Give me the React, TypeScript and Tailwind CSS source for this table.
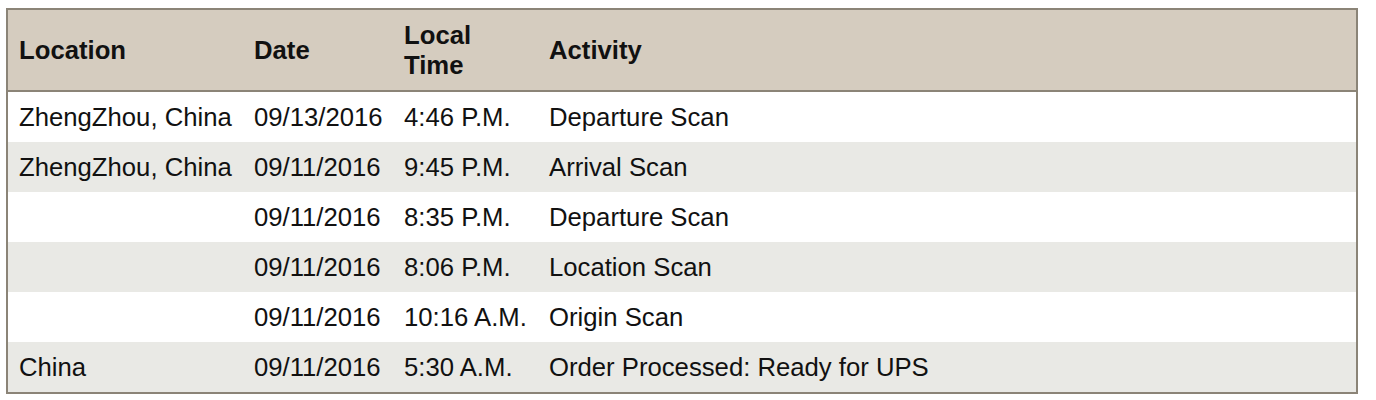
import React from "react";

const rows = [
  ["ZhengZhou, China", "09/13/2016", "4:46 P.M.", "Departure Scan"],
  ["ZhengZhou, China", "09/11/2016", "9:45 P.M.", "Arrival Scan"],
  ["", "09/11/2016", "8:35 P.M.", "Departure Scan"],
  ["", "09/11/2016", "8:06 P.M.", "Location Scan"],
  ["", "09/11/2016", "10:16 A.M.", "Origin Scan"],
  ["China", "09/11/2016", "5:30 A.M.", "Order Processed: Ready for UPS"],
];

export default function App() {
  return (
    <div className="bg-white pl-[6px] pt-[8px] w-[1376px] h-[400px] text-[#111] [font-family:'Liberation_Sans',Arial,sans-serif]">
      <table className="w-[1352px] border-2 border-[#8b8477] border-separate border-spacing-0 table-fixed text-[25.7px]">
        <colgroup>
          <col className="w-[235px]" />
          <col className="w-[150px]" />
          <col className="w-[145px]" />
          <col />
        </colgroup>
        <thead>
          <tr className="bg-[#d5ccbf] h-[82px]">
            <th className="text-left font-bold pl-[11px] pr-[4px] leading-[30px] border-b-2 border-[#8b8477]">Location</th>
            <th className="text-left font-bold pl-[11px] pr-[4px] leading-[30px] border-b-2 border-[#8b8477]">Date</th>
            <th className="text-left font-bold pl-[11px] pr-[4px] leading-[30px] border-b-2 border-[#8b8477]">Local Time</th>
            <th className="text-left font-bold pl-[11px] pr-[4px] leading-[30px] border-b-2 border-[#8b8477]">Activity</th>
          </tr>
        </thead>
        <tbody>
          {rows.map((r, i) => (
            <tr key={i} className={i % 2 === 1 ? "bg-[#e9e9e5] h-[50px]" : "bg-white h-[50px]"}>
              {r.map((c, j) => (
                <td key={j} className="pl-[11px] pr-[4px] leading-[30px] whitespace-nowrap">
                  {c}
                </td>
              ))}
            </tr>
          ))}
        </tbody>
      </table>
    </div>
  );
}
